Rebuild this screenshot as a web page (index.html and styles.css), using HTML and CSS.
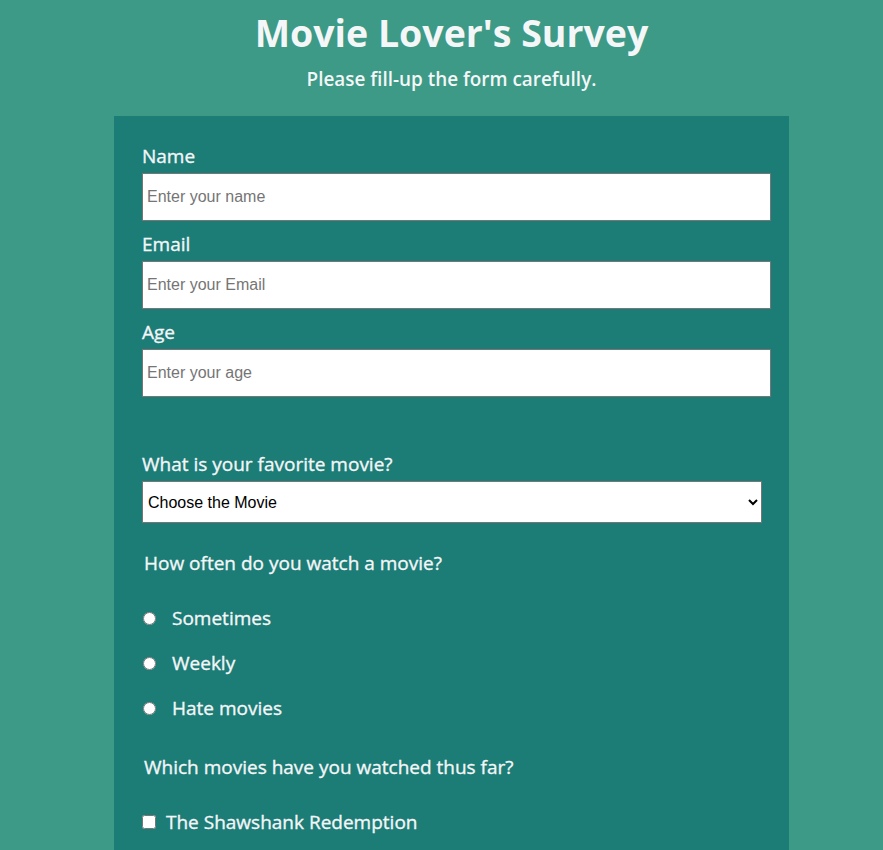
FILE: index.html
```html
<!DOCTYPE html>
<html lang="en">
<head>
<meta charset="utf-8">
<title>Movie Lover's Survey</title>
<link rel="stylesheet" href="styles.css">
</head>
<body>
<header class="hero">
  <h1 class="title" id="title">Movie Lover's Survey</h1>
  <p class="subtitle" id="description">Please fill-up the form carefully.</p>
</header>
<main class="card">
  <form id="survey-form" class="form">
    <div class="field field-first">
      <label class="label" for="name" id="name-label">Name</label>
      <input class="text-input" id="name" type="text" placeholder="Enter your name">
    </div>
    <div class="field">
      <label class="label" for="email" id="email-label">Email</label>
      <input class="text-input" id="email" type="email" placeholder="Enter your Email">
    </div>
    <div class="field">
      <label class="label" for="number" id="number-label">Age</label>
      <input class="text-input" id="number" type="number" placeholder="Enter your age">
    </div>
    <div class="field field-select">
      <label class="label" for="dropdown">What is your favorite movie?</label>
      <select class="select" id="dropdown">
        <option>Choose the Movie</option>
        <option>The Godfather</option>
        <option>Inception</option>
      </select>
    </div>
    <p class="question">How often do you watch a movie?</p>
    <label class="choice radio-first"><input class="radio" type="radio" name="often" value="sometimes"><span>Sometimes</span></label>
    <label class="choice"><input class="radio" type="radio" name="often" value="weekly"><span>Weekly</span></label>
    <label class="choice"><input class="radio" type="radio" name="often" value="hate"><span>Hate movies</span></label>
    <p class="question question-check">Which movies have you watched thus far?</p>
    <label class="check-row"><input class="checkbox" type="checkbox" value="shawshank"><span>The Shawshank Redemption</span></label>
    <label class="check-row"><input class="checkbox" type="checkbox" value="godfather"><span>The Godfather</span></label>
  </form>
</main>
</body>
</html>
```
FILE: styles.css
```css
* { box-sizing: border-box; }

html, body { margin: 0; }

body {
  background: #3c9a86;
  color: #f4f6f8;
  font-family: "Open Sans", "DejaVu Sans", sans-serif;
  padding-left: 20px;
}

.hero {
  text-align: center;
  padding-top: 8px;
}

.title {
  margin: 0;
  font-size: 37.5px;
  line-height: 50px;
  font-weight: 700;
}

.subtitle {
  margin: 8px 0 0;
  font-size: 18.9px;
  line-height: 26px;
  font-weight: 600;
}

.card {
  width: 675px;
  margin: 24px auto 0;
  background: #1c7c76;
  padding: 28px 18px 40px 28px;
}

.form { display: block; }

.field { margin-top: 11px; }
.field-first { margin-top: 0; }
.field-select { margin-top: 55px; }

.label,
.question,
.choice,
.check-row {
  font-size: 19px;
  line-height: 24px;
  -webkit-text-stroke: 0.35px currentColor;
}

.label {
  display: block;
  margin-bottom: 5px;
}

.text-input {
  display: block;
  width: 629px;
  height: 48px;
  border: 1px solid #767676;
  background: #fff;
  padding: 0 4px;
  font-family: "Liberation Sans", Arial, sans-serif;
  font-size: 16px;
  color: #000;
  margin: 0;
}

.text-input::placeholder { color: #757575; }

.select {
  display: block;
  width: 620px;
  height: 42px;
  border: 1px solid #767676;
  background: #fff;
  font-family: "Liberation Sans", Arial, sans-serif;
  font-size: 16px;
  color: #000;
  padding: 0 1px;
  margin: 0;
}

.question {
  margin: 28px 0 0;
  padding-left: 2px;
}

.choice {
  display: flex;
  align-items: center;
  margin-top: 21px;
}

.radio-first { margin-top: 31px; }

.radio {
  margin: 0 16px 0 1px;
  width: 13px;
  height: 13px;
}

.question-check { margin-top: 35px; }

.check-row {
  display: flex;
  align-items: center;
  margin-top: 31px;
}

.checkbox {
  margin: 0 10px 0 0;
  width: 14px;
  height: 14px;
}
```
